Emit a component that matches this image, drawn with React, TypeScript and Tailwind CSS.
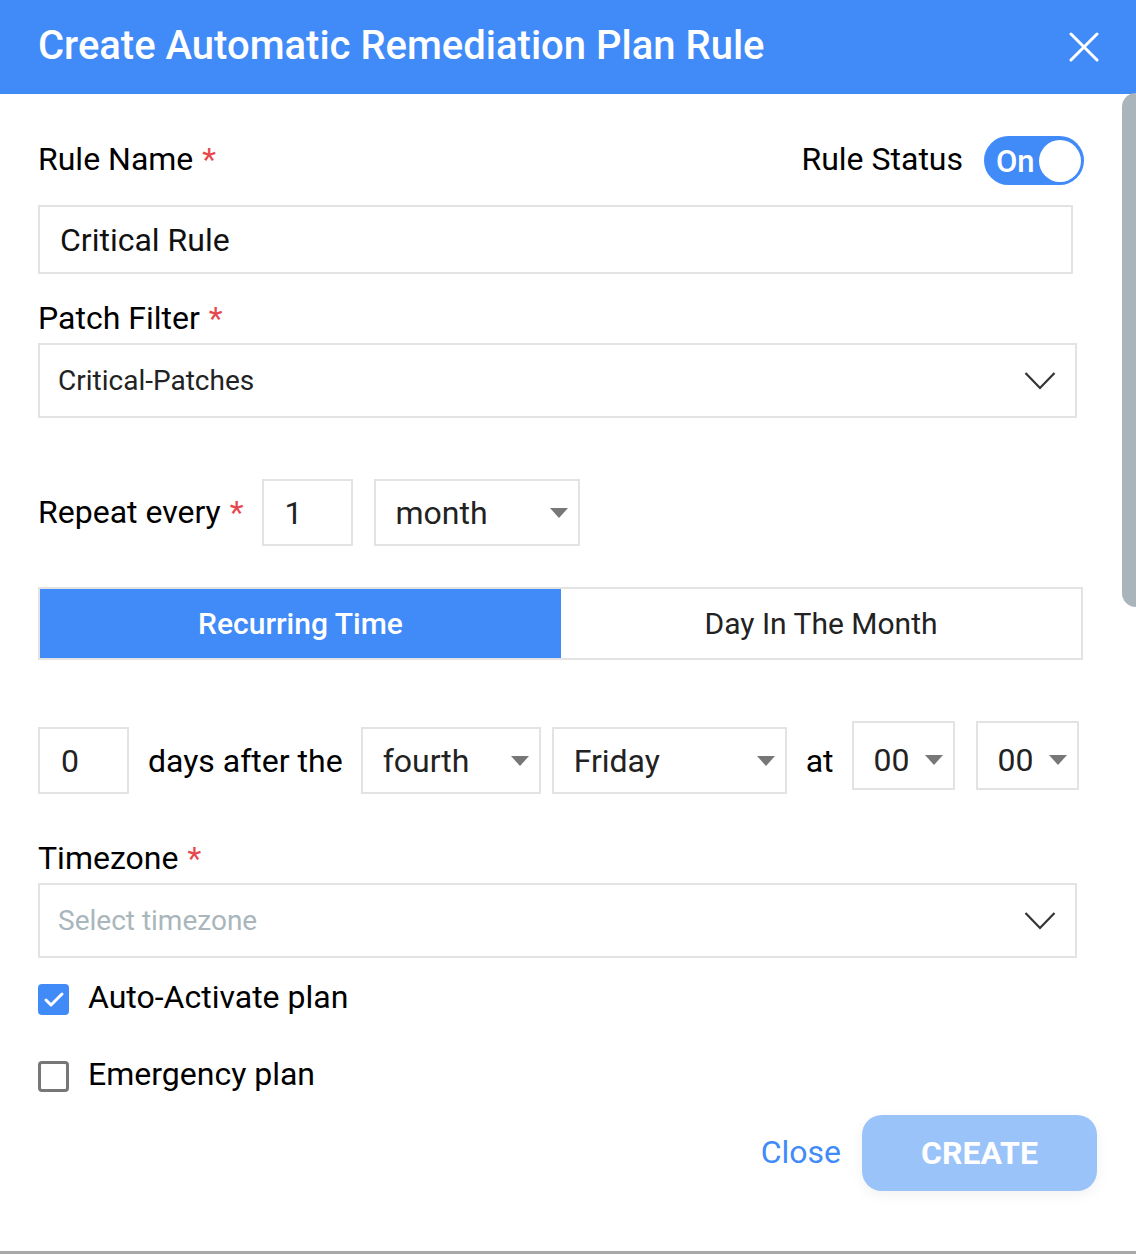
import { Check } from 'lucide-react'

function Caret() {
  return (
    <svg width="18" height="10" viewBox="0 0 18 10" className="shrink-0">
      <path d="M0 0 L18 0 L9 10 Z" fill="#777777" />
    </svg>
  )
}

function Chevron() {
  return (
    <svg width="32" height="20" viewBox="0 0 32 20" className="shrink-0">
      <path d="M1.5 2 L16 17 L30.5 2" fill="none" stroke="#333333" strokeWidth="2.2" />
    </svg>
  )
}

function CloseIcon() {
  return (
    <svg width="30" height="30" viewBox="0 0 30 30" className="shrink-0">
      <path d="M2 2 L28 28 M28 2 L2 28" stroke="white" strokeWidth="3" strokeLinecap="round" />
    </svg>
  )
}

function Star() {
  return <span className="ml-[9px] text-[#e5484d]">*</span>
}

function SmallSelect({ value, width, height = 'h-[67px]', pl = 'pl-[20px]', extra = '' }: { value: string; width: string; height?: string; pl?: string; extra?: string }) {
  return (
    <div className={`flex ${width} ${height} ${pl} ${extra} shrink-0 items-center justify-between border-2 border-[#e3e3e3] pr-[10px] text-[32px] text-[#222]`}>
      <span>{value}</span>
      <Caret />
    </div>
  )
}

export default function App() {
  return (
    <div className="relative h-[1254px] w-[1136px] overflow-hidden bg-white font-['Roboto',sans-serif] text-black">
      {/* Header */}
      <div className="flex h-[94px] items-center justify-between bg-[#418bf8] pl-[38px] pr-[37px]">
        <h1 className="-mt-[3px] text-[40px] font-medium text-white">Create Automatic Remediation Plan Rule</h1>
        <CloseIcon />
      </div>

      <div className="pl-[38px]">
        {/* Rule name + status */}
        <div className="mt-[42px] flex h-[49px] w-[1046px] items-center justify-between text-[32px]">
          <div className="-mt-[3px] leading-none">
            Rule Name<Star />
          </div>
          <div className="flex items-center gap-[21px]">
            <span className="-mt-[3px] leading-none">Rule Status</span>
            <div className="flex h-[49px] w-[100px] items-center justify-between rounded-full bg-[#418bf8] pl-[12px] pr-[3px]">
              <span className="mt-[2px] text-[31px] font-medium leading-none text-white">On</span>
              <div className="h-[42px] w-[42px] rounded-full bg-white" />
            </div>
          </div>
        </div>

        <div className="mt-[20px] flex h-[69px] w-[1035px] items-center border-2 border-[#e3e3e3] pl-[20px] text-[32px] text-[#111]">
          Critical Rule
        </div>

        {/* Patch filter */}
        <div className="mt-[26px] h-[36px] text-[32px] leading-[36px]">
          Patch Filter<Star />
        </div>
        <div className="mt-[7px] flex h-[75px] w-[1039px] items-center justify-between border-2 border-[#e3e3e3] pl-[18px] pr-[19px] text-[28px] text-[#222]">
          <span>Critical-Patches</span>
          <Chevron />
        </div>

        {/* Repeat every */}
        <div className="mt-[61px] flex h-[67px] items-center text-[32px]">
          <span className="-mt-[2px]">
            Repeat every<Star />
          </span>
          <div className="ml-[18px] flex h-[67px] w-[91px] items-center border-2 border-[#e3e3e3] pl-[21px] text-[#222]">1</div>
          <div className="ml-[21px]">
            <SmallSelect value="month" width="w-[206px]" />
          </div>
        </div>

        {/* Tabs */}
        <div className="mt-[41px] flex h-[73px] w-[1045px] border-2 border-[#e3e3e3] text-[30px]">
          <div className="flex w-[521px] items-center justify-center bg-[#418bf8] font-medium text-white">Recurring Time</div>
          <div className="flex flex-1 items-center justify-center text-[#222]">Day In The Month</div>
        </div>

        {/* Schedule row */}
        <div className="mt-[61px] flex h-[73px] items-start text-[32px]">
          <div className="mt-[6px] flex h-[67px] w-[91px] items-center border-2 border-[#e3e3e3] pl-[21px] text-[#222]">0</div>
          <span className="ml-[19px] mt-[6px] flex h-[67px] items-center">days after the</span>
          <div className="ml-[18px] mt-[6px]">
            <SmallSelect value="fourth" width="w-[180px]" />
          </div>
          <div className="ml-[11px] mt-[6px]">
            <SmallSelect value="Friday" width="w-[235px]" />
          </div>
          <span className="ml-[19px] mt-[6px] flex h-[67px] items-center">at</span>
          <div className="ml-[18px]">
            <SmallSelect value="00" width="w-[103px]" height="h-[69px]" pl="pl-[20px]" extra="pt-[8px]" />
          </div>
          <div className="ml-[21px]">
            <SmallSelect value="00" width="w-[103px]" height="h-[69px]" pl="pl-[20px]" extra="pt-[8px]" />
          </div>
        </div>

        {/* Timezone */}
        <div className="mt-[46px] h-[36px] text-[32px] leading-[36px]">
          Timezone<Star />
        </div>
        <div className="mt-[7px] flex h-[75px] w-[1039px] items-center justify-between border-2 border-[#e3e3e3] pl-[18px] pr-[19px] text-[28px] text-[#a9b6bb]">
          <span>Select timezone</span>
          <Chevron />
        </div>

        {/* Checkboxes */}
        <div className="mt-[26px] flex h-[31px] items-center gap-[19px] text-[32px]">
          <div className="flex h-[31px] w-[31px] items-center justify-center rounded-[4px] bg-[#418bf8]">
            <Check size={24} strokeWidth={3} className="text-white" />
          </div>
          <span className="-mt-[5px]">Auto-Activate plan</span>
        </div>
        <div className="mt-[46px] flex h-[31px] items-center gap-[19px] text-[32px]">
          <div className="h-[31px] w-[31px] rounded-[4px] border-[3px] border-[#777]" />
          <span className="-mt-[5px]">Emergency plan</span>
        </div>

        {/* Footer buttons */}
        <div className="mt-[23px] flex w-[1059px] items-center justify-end gap-[21px]">
          <button type="button" className="-mt-[2px] text-[32px] text-[#418bf8]">Close</button>
          <button
            type="button"
            className="h-[76px] w-[235px] rounded-[20px] bg-[#9ac3f9] text-[32px] font-bold text-white shadow-[0_4px_14px_rgba(0,0,0,0.06)]"
          >
            CREATE
          </button>
        </div>
      </div>

      {/* scrollbar */}
      <div className="absolute right-0 top-[93px] h-[514px] w-[14px] rounded-l-full bg-[#a9b5ba]" />
      {/* bottom edge */}
      <div className="absolute bottom-0 left-0 h-[3px] w-full bg-[#a8a8a8]" />
    </div>
  )
}
